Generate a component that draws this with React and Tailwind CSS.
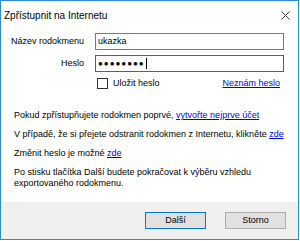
const font = { fontFamily: '"Liberation Sans", Arial, sans-serif' };

const App = () => {
  return (
    <div className="w-[300px] h-[241px] bg-white" style={font}>
      <div className="w-[299px] h-[240px] border border-[#2a8ce0] flex flex-col bg-white">
        <div className="h-[29px] flex items-center justify-between pl-[3px] pr-[8px]">
          <span className="text-[10px] text-black leading-none">Zpřístupnit na Internetu</span>
          <svg width="9" height="9" viewBox="0 0 9 9" className="text-[#333]">
            <path d="M0.5 0.5 L8.5 8.5 M8.5 0.5 L0.5 8.5" stroke="currentColor" strokeWidth="1" />
          </svg>
        </div>

        <div className="flex-1 text-[9px] text-black leading-[11px]">
          <div className="grid grid-cols-[83px_189px] gap-x-[11px] gap-y-[5px] mt-[3px] items-center">
            <span className="text-right">Název rodokmenu</span>
            <div className="h-[17px] border border-[#7a7a7a] flex items-center px-[2px]">ukazka</div>

            <span className="text-right">Heslo</span>
            <div className="h-[17px] border border-[#0078d7] flex items-center px-[2px]">
              <span className="tracking-[1px] text-[8px]">●●●●●●●●</span>
              <span className="w-px h-[11px] bg-black ml-px" />
            </div>

            <span />
            <div className="flex items-center justify-between h-[12px]">
              <label className="flex items-center gap-[5px]">
                <span className="w-[11px] h-[11px] border border-[#333] bg-white ml-[2px]" />
                <span>Uložit heslo</span>
              </label>
              <span className="text-[#0000ff] underline mr-[4px]">Neznám heslo</span>
            </div>
          </div>

          <div className="pl-[13px] mt-[21px] flex flex-col gap-[8px]">
            <p>
              Pokud zpřístupňujete rodokmen poprvé, <span className="text-[#0000ff] underline">vytvořte nejprve účet</span>
            </p>
            <p>
              V případě, že si přejete odstranit rodokmen z Internetu, klikněte <span className="text-[#0000ff] underline">zde</span>
            </p>
            <p>
              Změnit heslo je možné <span className="text-[#0000ff] underline">zde</span>
            </p>
            <p>
              Po stisku tlačítka Další budete pokračovat k výběru vzhledu
              <br />
              exportovaného rodokmenu.
            </p>
          </div>
        </div>

        <div className="h-[37px] bg-[#f0f0f0] flex items-center justify-end gap-[19px] pr-[12px] text-[9px]">
          <button className="w-[61px] h-[17px] bg-[#e1e1e1] border border-[#0078d7] text-black">Další</button>
          <button className="w-[61px] h-[17px] bg-[#e1e1e1] border border-[#adadad] text-black">Storno</button>
        </div>
      </div>
    </div>
  );
};

export default App;
